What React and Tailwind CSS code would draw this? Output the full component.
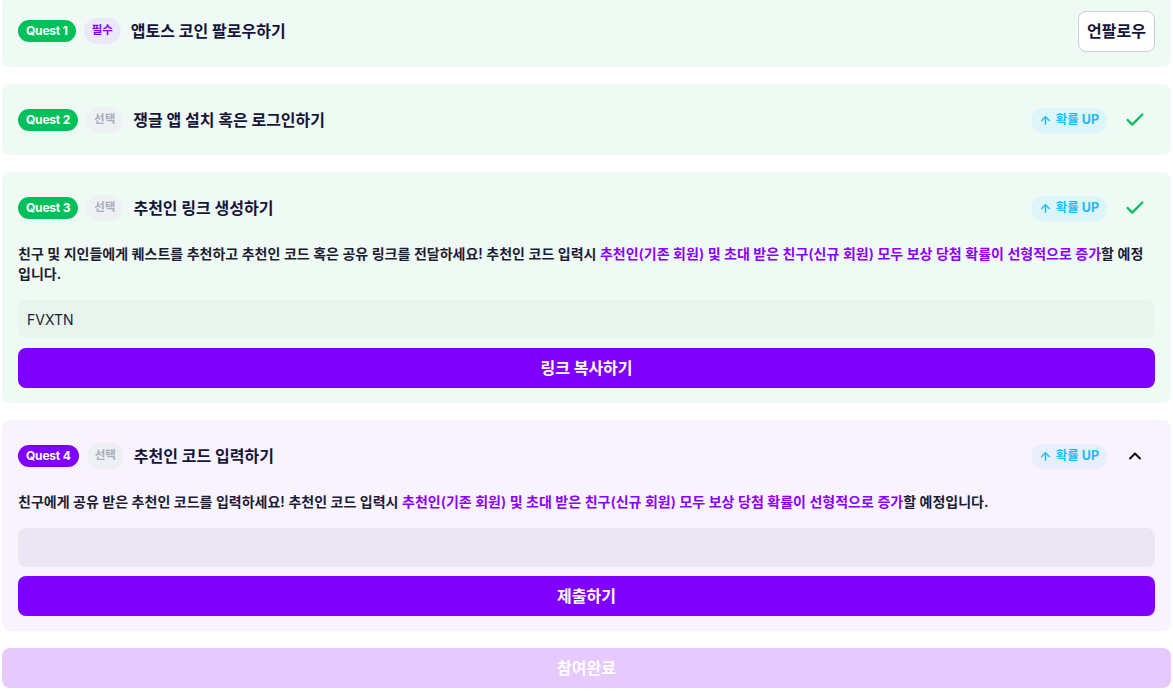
import React from "react";
import { Check, ChevronUp, ArrowUp } from "lucide-react";

const FONT = { fontFamily: '"Inter", "Noto Sans CJK KR", sans-serif' };

function QuestBadge({ n, purple }) {
  return (
    <span
      className={
        "flex h-[22px] items-center rounded-full px-2 text-[12px] font-bold tracking-[-0.2px] text-white " +
        (purple ? "bg-[#8000ff]" : "bg-[#00c05c]")
      }
    >
      Quest {n}
    </span>
  );
}

function TypePill({ required }) {
  return required ? (
    <span className="flex h-[26px] items-center rounded-full bg-[#ece8fb] px-[8px] text-[11.5px] font-bold text-[#8a00ff]">
      필수
    </span>
  ) : (
    <span className="flex h-[26px] items-center rounded-full bg-[#eef1f4] px-[8px] text-[11.5px] font-bold text-[#a9adbd]">
      선택
    </span>
  );
}

function UpPill({ lavender }) {
  return (
    <span
      className={
        "flex h-[25px] items-center gap-1 rounded-full px-2 text-[12.5px] font-bold text-[#1cbcf4] " +
        (lavender ? "bg-[#e7effd]" : "bg-[#dcf5f8]")
      }
    >
      <ArrowUp size={13} strokeWidth={2.5} />
      확률 UP
    </span>
  );
}

function Header({ n, purple, required, title, children }) {
  return (
    <div className="flex h-6 items-center">
      <div className="flex items-center gap-2">
        <QuestBadge n={n} purple={purple} />
        <TypePill required={required} />
        <span className="ml-[2px] text-[16px] font-bold text-[#15153a]">{title}</span>
      </div>
      <div className="ml-auto flex items-center gap-2">{children}</div>
    </div>
  );
}

function Done() {
  return (
    <span className="flex w-10 justify-center text-[#00c05c]">
      <Check size={22} strokeWidth={2.5} />
    </span>
  );
}

const hl = "text-[#8a00ff]";

export default function App() {
  return (
    <div style={FONT} className="flex min-h-[695px] flex-col gap-[17px] overflow-hidden bg-white px-[2px]">
      {/* Quest 1 */}
      <section className="mt-[-5px] rounded-lg bg-[#f0faf5] px-4 pt-6 pb-6">
        <Header n={1} required title="앱토스 코인 팔로우하기">
          <button className="h-[41px] rounded-lg border border-[#c9cdd8] bg-white px-[8px] text-[16px] font-semibold text-[#15153a]">
            언팔로우
          </button>
        </Header>
      </section>

      {/* Quest 2 */}
      <section className="rounded-lg bg-[#f0faf5] px-4 pt-6 pb-[23px]">
        <Header n={2} title="쟁글 앱 설치 혹은 로그인하기">
          <UpPill />
          <Done />
        </Header>
      </section>

      {/* Quest 3 */}
      <section className="rounded-lg bg-[#f0faf5] px-4 pt-6 pb-[15px]">
        <Header n={3} title="추천인 링크 생성하기">
          <UpPill />
          <Done />
        </Header>
        <p className="mt-6 text-[14px] font-semibold leading-5 text-[#1c1c33]">
          <span className="whitespace-nowrap">
            친구 및 지인들에게 퀘스트를 추천하고 추천인 코드 혹은 공유 링크를 전달하세요! 추천인 코드 입력시{" "}
            <span className={hl}>추천인(기존 회원) 및 초대 받은 친구(신규 회원) 모두 보상 당첨 확률이 선형적으로 증가</span>할 예정
          </span>
          <br />
          입니다.
        </p>
        <div className="mt-4 flex h-[38px] items-center rounded-lg bg-[#e9f4ef] px-[9px] text-[14px] text-[#1c1c33]">
          FVXTN
        </div>
        <button className="mt-[10px] flex h-10 w-full items-center justify-center rounded-lg bg-[#8000ff] text-[16px] font-bold text-white">
          링크 복사하기
        </button>
      </section>

      {/* Quest 4 */}
      <section className="rounded-lg bg-[#f8f3fe] px-4 pt-6 pb-[15px]">
        <Header n={4} purple title="추천인 코드 입력하기">
          <UpPill lavender />
          <span className="flex w-10 justify-center text-[#111]">
            <ChevronUp size={20} strokeWidth={2.5} />
          </span>
        </Header>
        <p className="mt-6 text-[14px] font-semibold leading-5 text-[#1c1c33]">
          친구에게 공유 받은 추천인 코드를 입력하세요! 추천인 코드 입력시{" "}
          <span className={hl}>추천인(기존 회원) 및 초대 받은 친구(신규 회원) 모두 보상 당첨 확률이 선형적으로 증가</span>할 예정입니다.
        </p>
        <div className="mt-4 h-[39px] rounded-lg bg-[#ece6f3]" />
        <button className="mt-[9px] flex h-10 w-full items-center justify-center rounded-lg bg-[#8000ff] text-[16px] font-bold text-white">
          제출하기
        </button>
      </section>

      <button className="flex h-10 w-full items-center justify-center rounded-lg bg-[#e6cafe] text-[16px] font-bold text-white">
        참여완료
      </button>
    </div>
  );
}
